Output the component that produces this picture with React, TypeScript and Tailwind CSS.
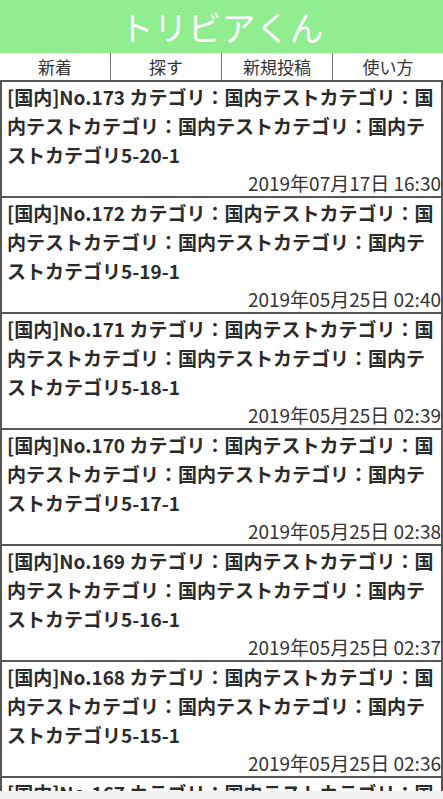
const posts = [
  { no: 173, sub: "5-20-1", date: "2019年07月17日 16:30" },
  { no: 172, sub: "5-19-1", date: "2019年05月25日 02:40" },
  { no: 171, sub: "5-18-1", date: "2019年05月25日 02:39" },
  { no: 170, sub: "5-17-1", date: "2019年05月25日 02:38" },
  { no: 169, sub: "5-16-1", date: "2019年05月25日 02:37" },
  { no: 168, sub: "5-15-1", date: "2019年05月25日 02:36" },
  { no: 167, sub: "5-14-1", date: "2019年05月25日 02:35" },
  { no: 166, sub: "5-13-1", date: "2019年05月25日 02:34" },
];

const menu = ["新着", "探す", "新規投稿", "使い方"];

export default function App() {
  return (
    <div className="min-h-screen bg-white text-[#333] font-['Noto_Sans_CJK_JP',sans-serif]">
      <header className="h-[53px] bg-[#90ee90] text-center text-[34px] leading-[53px] text-white">
        トリビアくん
      </header>
      <nav className="flex h-[27px]">
        {menu.map((m, i) => (
          <div
            key={m}
            className={
              "flex-1 text-center text-[17px] leading-[27px] text-[#333] " +
              (i < menu.length - 1 ? "border-r border-[#777]" : "")
            }
          >
            {m}
          </div>
        ))}
      </nav>
      <ul>
        {posts.map((p) => (
          <li key={p.no} className="border-x-2 border-t-2 border-[#555]">
            <div className="pl-[5px] pr-[3px] text-[19px] font-bold leading-[29px] text-[#2b2b2b]">
              [国内]No.{p.no} カテゴリ：国内テストカテゴリ：国内テストカテゴリ：国内テストカテゴリ：国内テストカテゴリ{p.sub}
            </div>
            <div className="text-right text-[19px] leading-[27px] text-[#333]">{p.date}</div>
          </li>
        ))}
      </ul>
      <div className="fixed bottom-0 left-0 h-[8px] w-full bg-[#f1f1f1]" />
    </div>
  );
}
